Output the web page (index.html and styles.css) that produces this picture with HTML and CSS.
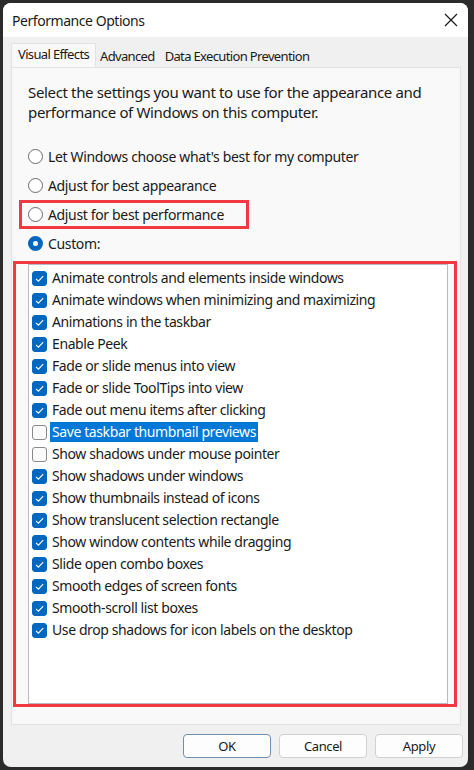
FILE: index.html
```html
<!DOCTYPE html>
<html lang="en">
<head>
  <meta charset="UTF-8">
  <meta name="viewport" content="width=device-width, initial-scale=1.0">
  <title>Performance Options</title>
  <link rel="stylesheet" href="styles.css">
</head>
<body>

<div class="window">
  <div class="titlebar">
    <span class="title">Performance Options</span>
    <svg class="close" width="14" height="14" viewBox="0 0 14 14">
      <path d="M1 1 L13 13 M13 1 L1 13" stroke="#1b1b1b" stroke-width="1.2" fill="none"/>
    </svg>
  </div>

  <div class="client">
    <div class="tabs">
      <div class="tab active">Visual Effects</div>
      <div class="tab">Advanced</div>
      <div class="tab">Data Execution Prevention</div>
    </div>

    <div class="panel">
      <p class="intro">Select the settings you want to use for the appearance and performance of Windows on this computer.</p>

      <div class="radios">
        <div class="radio-row"><span class="radio"></span>Let Windows choose what's best for my computer</div>
        <div class="radio-row"><span class="radio"></span>Adjust for best appearance</div>
        <div class="radio-row marked"><span class="radio"></span>Adjust for best performance</div>
        <div class="radio-row"><span class="radio on"></span>Custom:</div>
      </div>

      <div class="listbox">
        <div class="mark-box"></div>
        <ul id="effects"></ul>
      </div>
    </div>

    <div class="buttons">
      <button class="default">OK</button>
      <button>Cancel</button>
      <button>Apply</button>
    </div>
  </div>
</div>

<script>
  // Visual effect options: [label, checked, selected]
  const effects = [
    ['Animate controls and elements inside windows', true],
    ['Animate windows when minimizing and maximizing', true],
    ['Animations in the taskbar', true],
    ['Enable Peek', true],
    ['Fade or slide menus into view', true],
    ['Fade or slide ToolTips into view', true],
    ['Fade out menu items after clicking', true],
    ['Save taskbar thumbnail previews', false, true],
    ['Show shadows under mouse pointer', false],
    ['Show shadows under windows', true],
    ['Show thumbnails instead of icons', true],
    ['Show translucent selection rectangle', true],
    ['Show window contents while dragging', true],
    ['Slide open combo boxes', true],
    ['Smooth edges of screen fonts', true],
    ['Smooth-scroll list boxes', true],
    ['Use drop shadows for icon labels on the desktop', true]
  ];

  const check = '<svg width="15" height="15" viewBox="0 0 15 15"><path d="M4 7.8 L6.4 10.2 L11.2 5.2" stroke="#fff" stroke-width="1.1" fill="none"/></svg>';

  const list = document.getElementById('effects');
  effects.forEach(([label, on, selected]) => {
    const li = document.createElement('li');
    li.innerHTML = `<span class="box${on ? ' on' : ''}">${on ? check : ''}</span>` +
      `<span class="label${selected ? ' selected' : ''}">${label}</span>`;
    list.appendChild(li);
  });
</script>

</body>
</html>
```

FILE: styles.css
```css
body {
  margin: 0;
  padding: 3px 6px 3px 3px;
  background-color: #2b2b2b;
  font-family: "Noto Sans", sans-serif;
  font-size: 14px;
  letter-spacing: -0.35px;
  color: #1a1a1a;
}
.window {
  width: 465px;
  height: 764px;
  background-color: #f0f0f0;
  border-radius: 8px;
  overflow: hidden;
  display: flex;
  flex-direction: column;
}
.titlebar {
  height: 34px;
  background-color: #fff;
  display: flex;
  align-items: center;
  justify-content: space-between;
  padding: 0 10px 0 9px;
}
.title {
  font-size: 14px;
  letter-spacing: -0.45px;
}
.client {
  flex: 1;
  padding: 7px 7px 0 8px;
  display: flex;
  flex-direction: column;
}
.tabs {
  display: flex;
  height: 23px;
  align-items: flex-end;
  font-size: 13px;
  letter-spacing: -0.65px;
}
.tab {
  height: 20px;
  line-height: 19px;
  padding: 0 5px;
  background-color: #f0f0f0;
}
.tab.active {
  height: 23px;
  line-height: 21px;
  padding: 0 6px;
  background-color: #f9f9f9;
  border: 1px solid #e2e2e2;
  border-bottom: none;
  border-radius: 2px 2px 0 0;
}
.tab.active + .tab {
  padding-left: 4px;
}
.panel {
  background-color: #f9f9f9;
  border: 1px solid #e2e2e2;
  padding: 14px 12px 20px 16px;
}
.intro {
  margin: 0 0 20px;
  font-size: 15px;
  line-height: 20px;
}
.radios {
  margin-bottom: 6px;
}
.radio-row {
  position: relative;
  height: 29px;
  display: flex;
  align-items: center;
  gap: 5px;
}
.radio {
  width: 13px;
  height: 13px;
  border: 1px solid #6b6b6b;
  border-radius: 50%;
  background-color: #fff;
  box-sizing: content-box;
}
.radio.on {
  width: 5px;
  height: 5px;
  border: 5px solid #0067c0;
}
.marked::after {
  content: "";
  position: absolute;
  left: -9px;
  top: 0;
  width: 224px;
  height: 23px;
  border: 3px solid #ef3a42;
}
.listbox {
  position: relative;
  height: 438px;
  background-color: #fff;
  border: 1px solid #b9b9c6;
}
.mark-box {
  position: absolute;
  left: -16px;
  top: -4px;
  right: -10px;
  bottom: -4px;
  border: 3px solid #ef3a42;
  pointer-events: none;
}
.listbox ul {
  list-style: none;
  margin: 0;
  padding: 2px 3px;
  letter-spacing: -0.4px;
}
.listbox li {
  height: 22px;
  display: flex;
  align-items: center;
  gap: 3px;
}
.box {
  width: 13px;
  height: 13px;
  border: 1px solid #8a8a8a;
  border-radius: 3px;
  background-color: #fbfbfb;
  box-sizing: content-box;
  display: flex;
}
.box.on {
  border-color: #0067c0;
  background-color: #0067c0;
}
.box svg {
  margin: -1px;
}
.label {
  padding: 0 2px;
  line-height: 20px;
}
.label.selected {
  background-color: #0078d7;
  color: #fff;
}
.buttons {
  display: flex;
  justify-content: flex-end;
  gap: 8px;
  padding: 9px 0 0;
  margin-right: -2px;
}
button {
  width: 88px;
  height: 24px;
  font-family: "Noto Sans", sans-serif;
  font-size: 13px;
  letter-spacing: -0.4px;
  color: #1a1a1a;
  background-color: #fdfdfd;
  border: 1px solid #d0d0d0;
  border-radius: 4px;
  padding: 0;
}
button.default {
  border-color: #6f8fb0;
}
```
